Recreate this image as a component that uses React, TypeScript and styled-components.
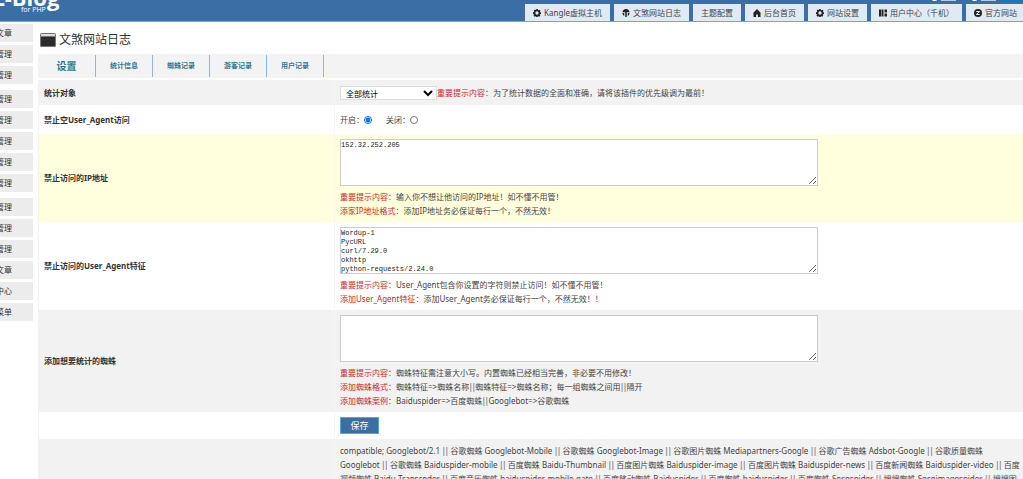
import React, { ReactNode } from 'react';
import styled, { createGlobalStyle } from 'styled-components';

const sans = `"Noto Sans", "Noto Sans CJK SC", sans-serif`;

const GlobalStyle = createGlobalStyle`
  * { box-sizing: border-box; }
  html { overflow: hidden; }
  body {
    margin: 0;
    background: #fff;
    color: #444;
    font: 8px/14px ${sans};
  }
  button, select, textarea, input { font-family: inherit; margin: 0; }
`;

const Page = styled.div`
  display: flex;
  flex-direction: column;
  overflow: hidden;
  height: 100vh;
`;

const Header = styled.header`
  position: relative;
  display: flex;
  justify-content: space-between;
  align-items: flex-end;
  flex: none;
  height: 22px;
  background: #3a6ea5;
  border-bottom: 1px solid #7ea3c8;
`;

const Logo = styled.a`
  display: block;
  width: 70px;
  height: 21px;
  overflow: hidden;
  color: #fff;
`;

const TopNav = styled.nav`
  display: flex;
  gap: 4px;
  margin-right: -2px;
`;

const TopLink = styled.a`
  display: flex;
  align-items: center;
  gap: 3px;
  height: 17px;
  padding: 0 8px;
  background: #e1e9f3;
  color: #444;
  text-decoration: none;
  white-space: nowrap;
  svg { flex: none; color: #222; }
`;

const UserStrip = styled.div`
  position: absolute;
  top: 0;
  right: 0;
  height: 2px;
  overflow: hidden;
  svg { display: block; }
`;

const Body = styled.div`
  display: flex;
  flex: none;
`;

const Sidebar = styled.nav`
  flex: none;
  width: 33px;
  margin-right: 5px;
  padding-top: 2px;
  overflow: hidden;
`;

const SideGroup = styled.div`
  display: flex;
  flex-direction: column;
  gap: 3px;
  margin-bottom: 6px;
`;

const SideLink = styled.a`
  display: flex;
  align-items: center;
  justify-content: flex-end;
  height: 18px;
  padding-right: 21px;
  background: #ececec;
  color: #333;
  text-decoration: none;
  white-space: nowrap;
`;

const Main = styled.main`
  flex: 1;
  min-width: 0;
`;

const Title = styled.h1`
  display: flex;
  align-items: center;
  gap: 3px;
  height: 24px;
  margin: 6px 0 2px;
  padding-left: 2px;
  font-size: 12px;
  font-weight: 400;
  color: #333;
`;

const Tabs = styled.nav`
  display: flex;
  height: 24px;
  margin-bottom: 2px;
  padding: 1px 0;
  background: #f3f3f3;
  border-radius: 2px;
`;

const Tab = styled.a<{ $current?: boolean }>`
  display: flex;
  align-items: center;
  justify-content: center;
  width: ${p => (p.$current ? 58 : 57)}px;
  border-right: 1px solid #8fb4e0;
  color: #2d7a92;
  font-size: ${p => (p.$current ? 10 : 7)}px;
  font-weight: 700;
  text-decoration: none;
`;

const Table = styled.table`
  width: 100%;
  border-collapse: collapse;
  table-layout: fixed;
`;

const Row = styled.tr<{ $tone?: 'grey' | 'yellow' }>`
  background: ${p => (p.$tone === 'grey' ? '#f2f2f2' : p.$tone === 'yellow' ? '#ffffdd' : '#fff')};
`;

const LabelCell = styled.th`
  width: 297px;
  padding: 0 6px;
  box-shadow: inset 1px 0 #f2f2f2, inset -1px 0 #f6f6f6;
  color: #333;
  text-align: left;
  font-weight: 700;
`;

const Cell = styled.td<{ $height?: number }>`
  height: ${p => (p.$height ? `${p.$height}px` : 'auto')};
  padding: ${p => (p.$height ? '0 0 0 5px' : '5px 0 4px 5px')};
`;

const Inline = styled.div`
  display: flex;
  align-items: center;
`;

const Choice = styled.label`
  display: flex;
  align-items: center;
  margin-right: 14px;
`;

const Radio = styled.input`
  width: 8px;
  height: 8px;
`;

const Select = styled.select`
  width: 97px;
  height: 14px;
  padding: 0 1px;
  border: 1px solid #ddd;
  background: #fff;
  color: #000;
  font-size: 8px;
`;

const TextArea = styled.textarea`
  display: block;
  width: 70%;
  height: 47px;
  margin-bottom: 4px;
  padding: 1px 0 0;
  border: 1px solid #ccc;
  background: #fff;
  color: #222;
  overflow: hidden;
  && { font: 7px/9px "Liberation Mono", "Noto Sans CJK SC", monospace; }
`;

const Hint = styled.p`
  margin: 0;
`;

const SpiderList = styled.p`
  margin: 0;
  padding-right: 2px;
`;

const Red = styled.span`
  color: #cc1f1f;
`;

const Bars = styled.span`
  font-family: "DejaVu Sans", sans-serif;
  font-size: 9px;
  line-height: 1px;
  color: #777;
`;

const SaveButton = styled.button`
  display: block;
  width: 39px;
  height: 17px;
  padding: 0;
  border: 1px solid #5fa3cf;
  background: #3a6ea5;
  color: #fff;
  font-size: 9px;
  line-height: 14px;
`;

const gear = (
  <svg width="8" height="8" viewBox="0 0 16 16">
    <path fill="currentColor" fillRule="evenodd" d="M6.6 0h2.8l.5 2 1.3.6L13 1.5l2 2-1.1 1.8.5 1.3 1.6.4v2.8l-1.9.5-.6 1.3 1 1.8-2 2-1.8-1-1.3.5-.5 1.9H6.6l-.5-1.9-1.3-.5-1.8 1-2-2 1-1.8-.5-1.3L0 9.4V6.6l1.9-.5.6-1.3-1-1.8 2-2 1.7 1.1L6.2 2zM8 4.7a3.3 3.3 0 1 0 0 6.6 3.3 3.3 0 0 0 0-6.6z" />
  </svg>
);
const dome = (
  <svg width="8" height="8" viewBox="0 0 16 16">
    <path fill="currentColor" d="M8 0c4 0 7 3 7 6.500H1C1 3 4 0 8 0z" />
    <path fill="currentColor" d="M6.500 6h3v10h-3zM1 7.500l3.500 1V14C2.500 13 1 11 1 7.500zM15 7.500l-3.500 1V14c2-1 3.500-3 3.500-6.500z" />
  </svg>
);
const home = (
  <svg width="8" height="8" viewBox="0 0 16 16">
    <path fill="currentColor" d="M8 0l8 8.500h-1V16H9.800v-5H6.200v5H1V8.500H0z" />
  </svg>
);
const blocks = (
  <svg width="8" height="8" viewBox="0 0 16 16">
    <path fill="currentColor" d="M0 1h4v14H0zM5 1h4v14H5zM11 1h5v6h-5zM11 9h5v6h-5z" />
  </svg>
);
const zmark = (
  <svg width="8" height="8" viewBox="0 0 16 16">
    <circle cx="8" cy="8" r="8" fill="currentColor" />
    <path d="M4.500 5h7l-7 6h7" fill="none" stroke="#e1e9f3" strokeWidth="2" />
  </svg>
);

const topLinks: [ReactNode, string][] = [
  [gear, 'Kangle虚拟主机'],
  [dome, '文煞网站日志'],
  [null, '主题配置'],
  [home, '后台首页'],
  [gear, '网站设置'],
  [blocks, '用户中心（千机）'],
  [zmark, '官方网站'],
];

const sideGroups = [
  ['文章', '管理', '管理'],
  ['管理', '管理', '管理', '管理', '管理'],
  ['管理', '管理', '管理', '文章', '中心', '菜单'],
];

const spiders = [
  'compatible; Googlebot/2.1 ',
  ' 谷歌蜘蛛 Googlebot-Mobile ',
  ' 谷歌蜘蛛 Googlebot-Image ',
  ' 谷歌图片蜘蛛 Mediapartners-Google ',
  ' 谷歌广告蜘蛛 Adsbot-Google ',
  ' 谷歌质量蜘蛛 Googlebot ',
  ' 谷歌蜘蛛 Baiduspider-mobile ',
  ' 百度蜘蛛 Baidu-Thumbnail ',
  ' 百度图片蜘蛛 Baiduspider-image ',
  ' 百度图片蜘蛛 Baiduspider-news ',
  ' 百度新闻蜘蛛 Baiduspider-video ',
  ' 百度视频蜘蛛 Baidu-Transcoder ',
  ' 百度音乐蜘蛛 baiduspider-mobile-gate ',
  ' 百度移动蜘蛛 Baiduspider ',
  ' 百度蜘蛛 baiduspider ',
  ' 百度蜘蛛 Sosospider ',
  ' 搜搜蜘蛛 Sosoimagespider ',
  ' 搜搜图片',
];

export default function App() {
  return (
    <Page>
      <GlobalStyle />
      <Header>
        <Logo href="#" aria-label="Z-Blog for PHP">
          <svg width="70" height="21" viewBox="0 0 70 21" fill="#fff">
            <text x="-8" y="6" fontSize="22" fontWeight="700" fontFamily="Open Sans, sans-serif">Z-Blog</text>
            <text x="21" y="12" fontSize="7" fontFamily="Open Sans, sans-serif">for PHP</text>
          </svg>
        </Logo>
        <TopNav>
          {topLinks.map(([icon, text]) => (
            <TopLink href="#" key={text}>{icon}{text}</TopLink>
          ))}
        </TopNav>
        <UserStrip>
          <svg width="93" height="2" viewBox="0 0 93 2">
            <path d="M2 0h5l-1 1H3zM42 0h5l-1 1h-3z" fill="#fff" />
            <path d="M11 0h15v1H11zM51 0h15v1H51z" fill="#b5cae0" />
            <path d="M72 0h21v2H72z" fill="#0a7cc4" />
          </svg>
        </UserStrip>
      </Header>
      <Body>
        <Sidebar>
          {sideGroups.map((group, g) => (
            <SideGroup key={g}>
              {group.map((text, i) => <SideLink href="#" key={i}>{text}</SideLink>)}
            </SideGroup>
          ))}
        </Sidebar>
        <Main>
          <Title>
            <svg width="16" height="14" viewBox="0 0 16 14">
              <rect width="16" height="14" rx="1.500" fill="#777" />
              <rect x="1" y="1" width="14" height="2" fill="#ddd" />
              <rect x="1" y="4" width="14" height="9" fill="#2c2c2c" />
            </svg>
            文煞网站日志
          </Title>
          <Tabs>
            <Tab href="#" $current>设置</Tab>
            <Tab href="#">统计信息</Tab>
            <Tab href="#">蜘蛛记录</Tab>
            <Tab href="#">游客记录</Tab>
            <Tab href="#">用户记录</Tab>
          </Tabs>
          <Table>
            <tbody>
              <Row $tone="grey">
                <LabelCell scope="row"><label htmlFor="target">统计对象</label></LabelCell>
                <Cell $height={25}>
                  <Inline>
                    <Select id="target"><option>全部统计</option></Select>
                    <span><Red>重要提示内容：</Red>为了统计数据的全面和准确，请将该插件的优先级调为最前！</span>
                  </Inline>
                </Cell>
              </Row>
              <Row>
                <LabelCell scope="row">禁止空User_Agent访问</LabelCell>
                <Cell $height={29}>
                  <Inline>
                    <Choice>开启：<Radio type="radio" name="ua" defaultChecked /></Choice>
                    <Choice>关闭：<Radio type="radio" name="ua" /></Choice>
                  </Inline>
                </Cell>
              </Row>
              <Row $tone="yellow">
                <LabelCell scope="row"><label htmlFor="ips">禁止访问的IP地址</label></LabelCell>
                <Cell>
                  <TextArea id="ips" defaultValue="152.32.252.205" />
                  <Hint><Red>重要提示内容：</Red>输入你不想让他访问的IP地址！如不懂不用管！</Hint>
                  <Hint><Red>添家IP地址格式：</Red>添加IP地址务必保证每行一个，不然无效！</Hint>
                </Cell>
              </Row>
              <Row>
                <LabelCell scope="row"><label htmlFor="agents">禁止访问的User_Agent特征</label></LabelCell>
                <Cell>
                  <TextArea id="agents" defaultValue={'Wordup-1\nPycURL\ncurl/7.29.0\nokhttp\npython-requests/2.24.0'} />
                  <Hint><Red>重要提示内容：</Red>User_Agent包含你设置的字符则禁止访问！如不懂不用管！</Hint>
                  <Hint><Red>添加User_Agent特征：</Red>添加User_Agent务必保证每行一个，不然无效！！</Hint>
                </Cell>
              </Row>
              <Row $tone="grey">
                <LabelCell scope="row"><label htmlFor="spiders">添加想要统计的蜘蛛</label></LabelCell>
                <Cell>
                  <TextArea id="spiders" />
                  <Hint><Red>重要提示内容：</Red>蜘蛛特征需注意大小写。内置蜘蛛已经相当完善，非必要不用修改！</Hint>
                  <Hint><Red>添加蜘蛛格式：</Red>蜘蛛特征=&gt;蜘蛛名称<Bars>||</Bars>蜘蛛特征=&gt;蜘蛛名称；每一组蜘蛛之间用<Bars>||</Bars>隔开</Hint>
                  <Hint><Red>添加蜘蛛案例：</Red>Baiduspider=&gt;百度蜘蛛<Bars>||</Bars>Googlebot=&gt;谷歌蜘蛛</Hint>
                </Cell>
              </Row>
              <Row>
                <LabelCell />
                <Cell $height={27}><SaveButton type="button">保存</SaveButton></Cell>
              </Row>
              <Row $tone="grey">
                <LabelCell />
                <Cell>
                  <SpiderList>
                    {spiders.map((text, i) => (
                      <React.Fragment key={i}>{i > 0 && <Bars>||</Bars>}{text}</React.Fragment>
                    ))}
                  </SpiderList>
                </Cell>
              </Row>
            </tbody>
          </Table>
        </Main>
      </Body>
    </Page>
  );
}
